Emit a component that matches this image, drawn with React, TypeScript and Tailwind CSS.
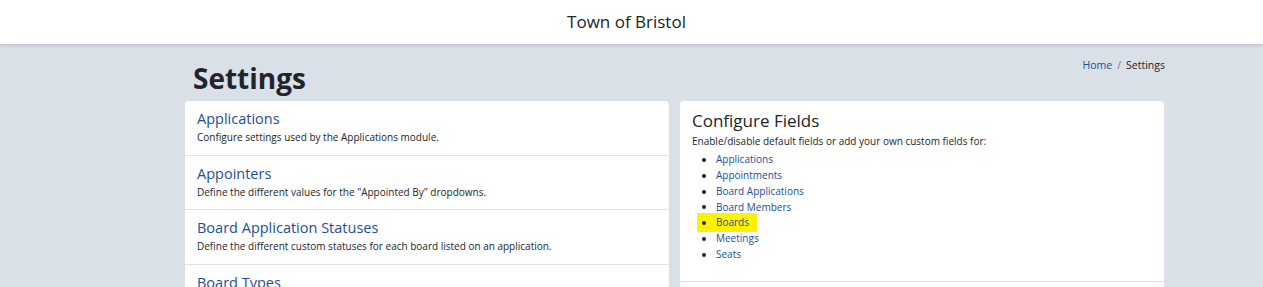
import React from "react";

const items = [
  { title: "Applications", desc: "Configure settings used by the Applications module." },
  { title: "Appointers", desc: 'Define the different values for the "Appointed By" dropdowns.' },
  { title: "Board Application Statuses", desc: "Define the different custom statuses for each board listed on an application." },
  { title: "Board Types", desc: "Define the different types of boards." },
];

const fields = ["Applications", "Appointments", "Board Applications", "Board Members", "Boards", "Meetings", "Seats"];

export default function App() {
  return (
    <div className="h-[287px] overflow-hidden bg-[#dae0e7] text-[#212529]" style={{ fontFamily: '"Open Sans", "Noto Sans", sans-serif' }}>
      <header className="h-[44px] bg-white shadow-[0_2px_3px_rgba(0,0,0,0.12)] flex items-center justify-center relative z-10">
        <span className="text-[17px] font-medium text-[#212529] -ml-[10px]">Town of Bristol</span>
      </header>
      <div className="pl-[185px] w-[1165px]">
        <div className="flex justify-between items-start">
          <h1 className="text-[28px] font-bold leading-none pl-[8px] pt-[20px] pb-[9px]">Settings</h1>
          <nav className="text-[10.5px] pt-[14px] flex gap-[5px]">
            <span className="text-[#1a4e9c]">Home</span>
            <span className="text-[#6c757d]">/</span>
            <span>Settings</span>
          </nav>
        </div>
        <div className="flex gap-[11px]">
          <div className="w-[484px] bg-white rounded-[4px]">
            {items.map((it, i) => (
              <div key={i} className={"px-[12px] pt-[8px] pb-[9.5px] " + (i < items.length - 1 ? "border-b border-[#dee2e6]" : "")}>
                <div className="text-[14.5px] leading-[20px] text-[#1a4e9c]">{it.title}</div>
                <div className="text-[10px] leading-[16px]">{it.desc}</div>
              </div>
            ))}
          </div>
          <div className="w-[484px] bg-white rounded-[4px] self-start">
            <div className="px-[12px] pt-[9px] pb-[18px] border-b border-[#dee2e6]">
              <div className="text-[17px] leading-[22px]">Configure Fields</div>
              <div className="text-[10px] leading-[16px] mt-[1px]">Enable/disable default fields or add your own custom fields for:</div>
              <ul className="mt-[3px] text-[10px] leading-[15.85px]">
                {fields.map((f) => (
                  <li key={f} className="relative flex items-center">
                    {f === "Boards" && (
                      <span className="absolute left-[5px] top-[-2px] w-[60px] h-[19px] bg-[#fff200]"></span>
                    )}
                    <span className="relative w-[4px] h-[4px] rounded-full bg-[#212529] ml-[10px] mr-[10px]"></span>
                    <span className="relative text-[#1a4e9c]">{f}</span>
                  </li>
                ))}
              </ul>
            </div>
            <div className="h-[40px]"></div>
          </div>
        </div>
      </div>
    </div>
  );
}
